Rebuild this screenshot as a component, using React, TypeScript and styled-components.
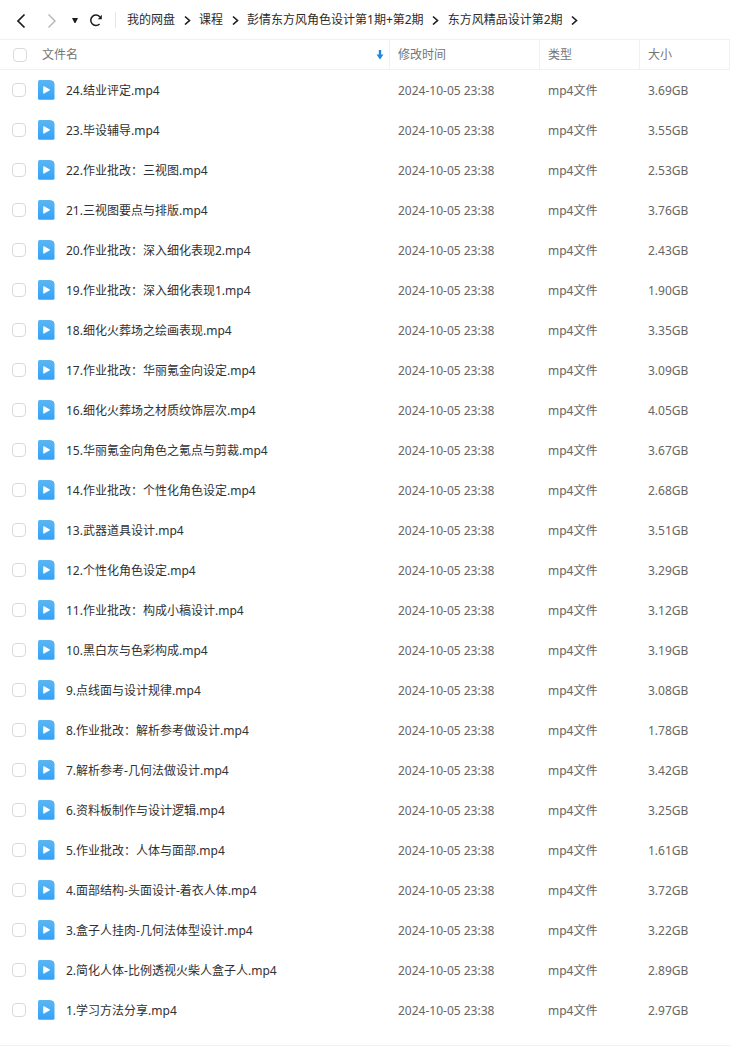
import React, { useState } from "react";
import styled, { createGlobalStyle } from "styled-components";

const GlobalStyle = createGlobalStyle`
  *, *::before, *::after { box-sizing: border-box; }
  body {
    margin: 0;
    background: #fff;
    color: #303133;
    font-family: "Noto Sans", "Noto Sans CJK SC", sans-serif;
    font-size: 12px;
    line-height: 20px;
  }
`;

const Page = styled.main`
  padding-bottom: 15px;
  border-bottom: 1px solid #f0f1f2;
`;

const Toolbar = styled.header`
  display: flex;
  align-items: center;
  height: 39px;
  padding-left: 12px;
`;

const HistoryButtons = styled.div`
  display: flex;
  flex: none;
  align-items: center;
  gap: 12px;
`;

const IconButton = styled.button<{ $width: number; $muted?: boolean }>`
  display: flex;
  align-items: center;
  justify-content: center;
  flex: none;
  width: ${(p) => p.$width}px;
  height: 24px;
  padding: 0;
  border: 0;
  background: none;
  color: ${(p) => (p.$muted ? "#b4b4b4" : "#1c1c1c")};
  cursor: pointer;

  svg {
    flex: none;
    overflow: visible;
  }
`;

const Divider = styled.span`
  flex: none;
  width: 1px;
  height: 16px;
  margin: 0 11px;
  background: #e6e6e8;
`;

const Crumbs = styled.nav`
  display: flex;
  align-items: center;
  min-width: 0;
  white-space: nowrap;
`;

const Crumb = styled.a`
  color: #2b2b2b;
  text-decoration: none;
`;

const CrumbArrow = styled.span`
  display: flex;
  justify-content: center;
  width: 24px;
  color: #1c1c1c;
`;

const Table = styled.table`
  width: 100%;
  padding-right: 1px;
  table-layout: fixed;
  border-spacing: 0;
`;

const Column = styled.col<{ $width?: number }>`
  width: ${(p) => (p.$width ? `${p.$width}px` : "auto")};
`;

const HeadCell = styled.th`
  height: 31px;
  padding: 0 9px 0 8px;
  border: solid #f0f1f2;
  border-width: 1px 1px 1px 0;
  color: #757575;
  font-weight: 400;
  text-align: left;

  &:first-child { padding: 0 5px 0 13px; }
`;

const Cell = styled.td`
  height: 40px;
  padding: 2px 8px 0;
  color: #666;
  white-space: nowrap;

  &:first-child { padding: 0 8px 0 12px; }
`;

const NameLine = styled.div`
  display: flex;
  align-items: center;
`;

const HeadLabel = styled.label`
  flex: 1;
  margin-left: 15px;
`;

const FileLabel = styled.label`
  overflow: hidden;
  margin-left: 11px;
  padding-top: 2px;
  color: #303133;
  text-overflow: ellipsis;
`;

const Checkbox = styled.input`
  appearance: none;
  flex: none;
  width: 14px;
  height: 14px;
  margin: 0;
  border: 1px solid #d9dadc;
  border-radius: 4px;
  background: #fff;

  &:checked {
    border-color: #2a9bf5;
    background: #2a9bf5;
  }
`;

const FileSvg = styled.svg`
  flex: none;
  margin-left: 12px;
`;

const names = [
  "24.结业评定.mp4",
  "23.毕设辅导.mp4",
  "22.作业批改：三视图.mp4",
  "21.三视图要点与排版.mp4",
  "20.作业批改：深入细化表现2.mp4",
  "19.作业批改：深入细化表现1.mp4",
  "18.细化火葬场之绘画表现.mp4",
  "17.作业批改：华丽氪金向设定.mp4",
  "16.细化火葬场之材质纹饰层次.mp4",
  "15.华丽氪金向角色之氪点与剪裁.mp4",
  "14.作业批改：个性化角色设定.mp4",
  "13.武器道具设计.mp4",
  "12.个性化角色设定.mp4",
  "11.作业批改：构成小稿设计.mp4",
  "10.黑白灰与色彩构成.mp4",
  "9.点线面与设计规律.mp4",
  "8.作业批改：解析参考做设计.mp4",
  "7.解析参考-几何法做设计.mp4",
  "6.资料板制作与设计逻辑.mp4",
  "5.作业批改：人体与面部.mp4",
  "4.面部结构-头面设计-着衣人体.mp4",
  "3.盒子人挂肉-几何法体型设计.mp4",
  "2.简化人体-比例透视火柴人盒子人.mp4",
  "1.学习方法分享.mp4",
];

const sizes = [
  "3.69", "3.55", "2.53", "3.76", "2.43", "1.90", "3.35", "3.09",
  "4.05", "3.67", "2.68", "3.51", "3.29", "3.12", "3.19", "3.08",
  "1.78", "3.42", "3.25", "1.61", "3.72", "3.22", "2.89", "2.97",
];

const path = ["我的网盘", "课程", "彭倩东方风角色设计第1期+第2期", "东方风精品设计第2期"];

function VideoFileIcon() {
  return (
    <FileSvg width="17" height="20" viewBox="0 0 17 20" aria-hidden="true">
      <defs>
        <linearGradient id="file-blue" x1="0" y1="0" x2="0" y2="1">
          <stop offset="0" stopColor="#5ab6f3" />
          <stop offset="1" stopColor="#34a2f8" />
        </linearGradient>
      </defs>
      <path d="M1.500 0H12l4.500 4.500v13.700q0 1.500-1.500 1.500H1.500Q0 19.700 0 18.200V1.500Q0 0 1.500 0z" fill="url(#file-blue)" />
      <path d="M11.500 0Q16.500.3 16.500 4.800 15 3 11.500 0z" fill="#4aa3ea" />
      <path d="M5.200 6.800v6.200q0 1 .9.500l5.400-3q.9-.6 0-1.200L6.100 6.300q-.9-.5-.9.500z" fill="#fff" />
    </FileSvg>
  );
}

export default function App() {
  const [selected, setSelected] = useState<string[]>([]);
  const toggle = (name: string) =>
    setSelected((s) => (s.includes(name) ? s.filter((n) => n !== name) : [...s, name]));

  return (
    <>
      <GlobalStyle />
      <Page>
        <Toolbar>
          <HistoryButtons>
            <IconButton $width={18} aria-label="后退">
              <svg width="10" height="14" viewBox="0 0 10 14" fill="none" stroke="currentColor" strokeWidth="1.700">
                <path d="M8.500 1.500 2 8l6.500 6.500" />
              </svg>
            </IconButton>
            <IconButton $width={20} $muted aria-label="前进">
              <svg width="10" height="14" viewBox="0 0 10 14" fill="none" stroke="currentColor" strokeWidth="1.400">
                <path d="M1.500 1.500 8 8l-6.500 6.500" />
              </svg>
            </IconButton>
            <IconButton $width={2} aria-label="历史记录">
              <svg width="6" height="6" viewBox="0 0 6 6" fill="currentColor">
                <path d="M0 1h6L3.500 6h-1z" />
              </svg>
            </IconButton>
            <IconButton $width={16} aria-label="刷新">
              <svg width="14" height="14" viewBox="0 0 14 14" fill="none" stroke="currentColor" strokeWidth="1.500">
                <path d="M11 4A5.200 5.200 0 1 0 10.600 11" />
                <path d="M12.800 1.800v4.500H8.800z" fill="currentColor" stroke="none" />
              </svg>
            </IconButton>
          </HistoryButtons>
          <Divider />
          <Crumbs aria-label="路径">
            {path.map((part) => (
              <React.Fragment key={part}>
                <Crumb href="#">{part}</Crumb>
                <CrumbArrow>
                  <svg width="7" height="10" viewBox="0 0 7 10" fill="none" stroke="currentColor" strokeWidth="1.600">
                    <path d="M1 1.500 5.500 5.500 1 9.500" />
                  </svg>
                </CrumbArrow>
              </React.Fragment>
            ))}
          </Crumbs>
        </Toolbar>
        <Table>
          <colgroup>
            <Column />
            <Column $width={150} />
            <Column $width={100} />
            <Column $width={90} />
          </colgroup>
          <thead>
            <tr>
              <HeadCell>
                <NameLine>
                  <Checkbox
                    id="all"
                    type="checkbox"
                    checked={selected.length === names.length}
                    onChange={(e) => setSelected(e.target.checked ? names : [])}
                  />
                  <HeadLabel htmlFor="all">文件名</HeadLabel>
                  <IconButton $width={8} aria-label="排序">
                    <svg width="8" height="10" viewBox="0 0 8 10" fill="#2388dc">
                      <path d="M2.800 0h2.400v4.500h2.300L4 9.500.5 4.500h2.300z" />
                    </svg>
                  </IconButton>
                </NameLine>
              </HeadCell>
              <HeadCell>修改时间</HeadCell>
              <HeadCell>类型</HeadCell>
              <HeadCell>大小</HeadCell>
            </tr>
          </thead>
          <tbody>
            {names.map((name, i) => (
              <tr key={name}>
                <Cell>
                  <NameLine>
                    <Checkbox
                      id={`file-${i}`}
                      type="checkbox"
                      checked={selected.includes(name)}
                      onChange={() => toggle(name)}
                    />
                    <VideoFileIcon />
                    <FileLabel htmlFor={`file-${i}`}>{name}</FileLabel>
                  </NameLine>
                </Cell>
                <Cell>2024-10-05 23:38</Cell>
                <Cell>mp4文件</Cell>
                <Cell>{sizes[i]}GB</Cell>
              </tr>
            ))}
          </tbody>
        </Table>
      </Page>
    </>
  );
}
